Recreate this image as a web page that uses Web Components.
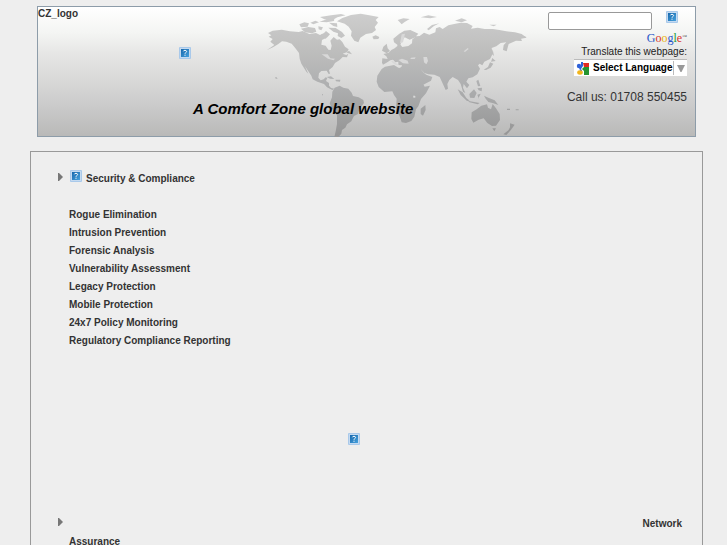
<!DOCTYPE html>
<html lang="en">
<head>
<meta charset="utf-8">
<title>Comfort Zone</title>
<style>
html { scrollbar-width: none; background: #eee; }
body { margin: 0; font-family: "Liberation Sans", Arial, sans-serif; font-size: 10px; line-height: 18px; color: #333; }
</style>
</head>
<body>
<cz-page>
  <cz-header>
    <cz-search slot="tools"></cz-search>
    <cz-translate slot="tools"></cz-translate>
  </cz-header>
  <cz-panel>
    <cz-section heading="Security &amp; Compliance" icon></cz-section>
    <cz-figure></cz-figure>
    <cz-section heading="Network Assurance" split></cz-section>
  </cz-panel>
</cz-page>
<script>
function define(name, html) {
  const t = document.createElement('template');
  t.innerHTML = html;
  customElements.define(name, class extends HTMLElement {
    constructor() {
      super();
      this.attachShadow({ mode: 'open' }).append(t.content.cloneNode(true));
    }
  });
}

define('cz-missing', `
<style>:host{display:inline-block;width:12px;height:12px}svg{display:block}</style>
<svg width="12" height="12" viewBox="0 0 12 12" aria-hidden="true">
  <defs><linearGradient id="g" x2="1" y2="1"><stop stop-color="#1768ad"/><stop offset="1" stop-color="#45a0dc"/></linearGradient></defs>
  <rect width="12" height="12" rx="1" fill="#a9c9ea"/><rect x="1" y="1" width="10" height="10" fill="#c5daf0"/>
  <rect x="2" y="2" width="8" height="8" fill="url(#g)"/>
  <path d="M4.4 4.3Q4.6 3.3 6 3.3T7.6 4.5Q7.6 5.2 6.8 5.6T6 6.7M6 7.7V8.8" fill="none" stroke="#fff" stroke-width="1"/>
</svg>`);

define('cz-world-map', `
<style>:host{display:block}svg{display:block;width:270px;height:130px}</style>
<svg viewBox="60 18 810 390" aria-hidden="true">
  <defs><linearGradient id="m" gradientUnits="userSpaceOnUse" x1="0" y1="30" x2="0" y2="400">
    <stop stop-color="#cfcfcf"/><stop offset=".3" stop-color="#bfbfbe"/><stop offset=".6" stop-color="#aeafb0"/><stop offset="1" stop-color="#969696"/>
  </linearGradient></defs>
  <g fill="url(#m)">
    <path d="M84 96L98 89 125 86 150 91 176 93 188 90 208 99 228 96 240 102 252 96 258 90 270 100 262 109 246 117 244 131 257 134 265 146 272 147 275 134 271 119 281 108 291 116 299 115 307 123 315 137 326 145 322 153 308 158 319 162 325 158 321 169 308 168 299 177 285 186 278 198 267 207 270 218 266 219 260 209 244 210 237 217 235 230 242 238 251 235 257 229 262 231 258 240 267 246 267 254 273 261 283 263 277 267 261 259 252 249 232 242 218 235 214 224 200 203 195 196 205 218 199 212 184 188 179 173 177 156 165 140 155 128 139 122 126 121 114 130 99 139 81 147 103 132 91 122 98 114 86 107 94 103Z"/>
    <path d="M178 70L193 64 207 67 203 77 183 79ZM183 83L205 78 225 81 229 92 216 97 195 94ZM211 65L226 59 237 64 220 70ZM235 76L249 79 244 88 236 85ZM238 62L261 55 283 54 282 60 260 64ZM240 48L273 43 303 39 317 43 292 49 278 57 253 55ZM267 65L291 67 292 78 280 75ZM265 80L287 81 306 93 315 104 304 111 293 105 294 97 280 92ZM243 100L262 103 258 113 246 109Z"/>
    <path d="M291 61L307 51 333 42 362 38 388 43 416 48 407 57 414 65 404 78 408 87 396 96 378 99 361 110 355 124 343 119 333 104 335 91 326 77 314 68ZM397 107L407 103 418 108 415 114 401 115ZM320 155L327 149 336 160ZM260 228L273 226 283 234 270 233ZM286 236L301 236 300 242 288 241Z"/>
    <path d="M284 260L299 254 310 260 325 263 335 275 339 285 356 289 370 297 372 306 359 322 354 339 342 345 334 361 321 370 316 380 306 387 304 398 295 408 283 408 287 391 291 369 291 343 276 323 269 307 276 289 277 272Z"/>
    <path d="M427 172L443 174 439 166 430 159 446 155 454 147 464 142 472 135 472 126 480 130 487 138 505 135 516 127 517 115 526 109 509 116 494 109 484 123 481 133 472 131 462 124 460 113 478 98 493 89 511 87 535 98 528 106 539 105 552 95 568 101 586 94 588 82 599 78 608 84 625 73 646 68 662 65 681 66 698 75 693 83 713 80 734 84 759 84 778 87 799 91 825 94 845 99 860 110 843 113 846 120 828 119 806 129 800 151 789 147 791 132 799 124 782 126 769 136 755 141 758 158 750 174 733 182 727 193 719 188 714 193 720 203 712 220 698 229 685 232 679 242 688 252 681 262 671 249 669 260 676 276 669 272 662 249 654 237 638 228 628 237 622 249 624 263 617 267 606 243 599 228 583 221 565 220 553 216 541 203 551 215 559 221 577 228 573 239 550 251 541 251 525 220 524 211 510 207 489 206 480 201 487 194 505 191 519 192 527 190 525 204 534 220 548 246 554 257 570 254 558 277 543 294 535 316 528 325 523 347 514 360 498 366 485 364 479 346 468 325 470 293 462 282 457 271 433 273 416 258 410 242 412 224 425 204 435 197 462 192 475 200 484 201 486 193 475 192 475 182 466 184 459 176 451 178 442 184 429 191 426 185Z"/>
    <path d="M426 149L430 137 440 128 443 142 450 150 440 157 433 153ZM473 57L490 52 509 54 494 63 485 70ZM542 49L565 43 591 48 571 52ZM561 84L576 72 598 67 582 75 566 88ZM645 59L665 52 681 58 665 64ZM748 71L770 71 761 76ZM839 101L859 108 844 112ZM542 323L556 312 557 327 549 344 542 339ZM731 206L744 198 750 184 760 188 752 200 738 207ZM753 182L757 171 767 180ZM755 158L758 145 762 165ZM709 240L715 236 721 255 714 256ZM712 262L726 260 725 271 716 268ZM653 265L668 274 679 291 689 299 681 300 662 282ZM688 279L702 265 710 276 703 291 690 290ZM686 300L719 306 713 310 686 303ZM712 281L722 278 716 290 718 298ZM732 284L745 290 764 298 775 312 760 307 745 303 736 292Z"/>
    <path d="M695 334L710 325 724 314 741 310 744 320 753 325 758 309 768 322 779 339 780 357 768 374 756 375 742 366 731 352 716 356 700 365 694 354ZM757 382L768 382 763 391ZM810 367L824 371 817 381 804 390 810 379ZM805 388L817 382 799 402 790 400Z"/>
    <path d="M105 229h5l3 4h-6ZM246 280h3v3h-3ZM801 323h9v4h-9ZM827 325h9v3h-9Z"/>
  </g>
  <g fill="#d8d8d8">
    <path d="M475 177L486 173 503 179 506 188 489 187ZM456 178L470 188 479 193 466 191 454 182ZM550 168L561 168 564 180 559 190 552 184ZM513 170L527 169 524 174 511 174ZM245 160L263 160 271 172 285 173 281 178 264 173Z"/>
    <path d="M485 100L495 98 489 124 480 127ZM671 151l12-10 3 3-11 9ZM519 284l6 0 2 5-6 2Z"/>
  </g>
</svg>`);

define('cz-page', `
<style>:host{display:block;padding:6px 24px 0 30px}</style><slot></slot>`);

define('cz-header', `
<style>
:host{display:grid;grid-template-columns:141px 1fr auto;position:relative;margin:0 7px 14px;min-height:129px;border:1px solid #8d9ca9;
  background:linear-gradient(#fff,#f4f5f3 20%,#e6e6e5 36%,#dadad9 55%,#cbcbcb 76%,#b9b9b8)}
cz-world-map{position:absolute;left:222px;top:0}
.logo{padding-top:1px;font-weight:bold;line-height:12px}
.mid{position:relative;padding-top:40px}
.mid cz-missing{display:block}
.slogan{margin:40px 0 0 14px;font:italic bold 15px/20px "Liberation Sans",Arial,sans-serif;color:#000}
.right{position:relative;display:flex;flex-direction:column;align-items:flex-end;padding:4px 8px 0 0}
.call{margin:12px 0 0;font-size:12px;line-height:18px}
</style>
<cz-world-map></cz-world-map>
<div class="logo">CZ_logo</div>
<div class="mid"><cz-missing></cz-missing><p class="slogan">A Comfort Zone global website</p></div>
<div class="right"><slot name="tools"></slot><p class="call">Call us: 01708 550455</p></div>`);

define('cz-search', `
<style>
:host{display:flex;align-items:flex-start;gap:14px;padding-right:9px}
input{box-sizing:border-box;width:104px;height:18px;margin:1px 0 0;padding:0 3px;border:1px solid #999;border-radius:2px;background:#fff;font:10px "Liberation Sans",sans-serif}
button{padding:0;border:0;background:none;line-height:0}
</style>
<input type="search" aria-label="Search"><button aria-label="Go"><cz-missing></cz-missing></button>`);

define('cz-translate', `
<style>
:host{display:flex;flex-direction:column;align-items:flex-end;margin-top:1px}
.google{font:12px/14px "Liberation Serif",serif}
.b{color:#2a56c8}.r{color:#d8342c}.y{color:#e8b010}.g{color:#249a3c}
sup{font-size:5px;line-height:0;vertical-align:4px;color:#555}
label{line-height:14px;color:#222}
.box{display:flex;align-items:center;box-sizing:border-box;height:17px;padding:0 2px;gap:4px;background:#fff;border-top:1px solid #bbb}
select{appearance:none;width:80px;height:16px;padding:0;border:0;background:none;color:#000;font:bold 10px/16px "Liberation Sans",sans-serif}
.arrow{display:block;padding-left:3px;border-left:1px solid #bbb;margin-left:-4px}
svg{display:block}
</style>
<div class="google"><span class="b">G</span><span class="r">o</span><span class="y">o</span><span class="b">g</span><span class="g">l</span><span class="r">e</span><sup>™</sup></div>
<label for="lang">Translate this webpage:</label>
<div class="box">
  <svg width="13" height="13" viewBox="0 0 13 13" aria-hidden="true">
    <path d="M7 1h6v4H8Z" fill="#e02a22"/><path d="M8 5h5v8H8V9L6 7Z" fill="#259431"/>
    <circle cx="3" cy="4" r="2.2" fill="#2f62d9"/><path d="M5 0h2v4L5 7H3L5 4Z" fill="#2f62d9"/>
    <path d="M3.500 6.500L6 8V9H4Z" fill="#2f62d9"/><ellipse cx="4" cy="10.500" rx="2.800" ry="2.200" fill="#f2b51c"/>
  </svg>
  <select id="lang"><option>Select Language</option></select>
  <span class="arrow"><svg width="8" height="14" viewBox="0 0 8 14" aria-hidden="true"><path d="M0 4h8L4.500 11h-1Z" fill="#999"/></svg></span>
</div>`);

define('cz-panel', `
<style>:host{display:block;border:1px solid #999;padding:18px 20px 20px 27px}</style><slot></slot>`);

define('cz-figure', `
<style>:host{display:flex;justify-content:center;padding:83px 0 70px 0}cz-missing{margin-right:33px}</style><cz-missing></cz-missing>`);

class CzSection extends HTMLElement {
  constructor() { super(); this.attachShadow({ mode: 'open' }); }
  connectedCallback() {
    const split = this.hasAttribute('split');
    const items = ['Rogue Elimination', 'Intrusion Prevention', 'Forensic Analysis', 'Vulnerability Assessment',
      'Legacy Protection', 'Mobile Protection', '24x7 Policy Monitoring', 'Regulatory Compliance Reporting'];
    const [first, ...rest] = this.getAttribute('heading').split(' ');
    this.shadowRoot.innerHTML = `
<style>
:host{display:grid;grid-template-columns:11px 1fr;font-weight:bold}
.marker{display:block;margin-top:3px}
a{color:inherit;text-decoration:none}
.head{display:flex;gap:4px;align-items:flex-start;padding-left:1px}
ul{grid-column:2;list-style:none;margin:18px 0 0;padding:0}
a.split{display:block}
.end{display:block;text-align:right}
</style>
<svg class="marker" width="5" height="8" viewBox="0 0 5 8" aria-hidden="true"><path d="M0 0h1l4 4-4 4H0Z" fill="#777"/></svg>
${split ? `<a class="split" href="#network"><span class="end">${first}</span> ${rest.join(' ')}</a>`
  : `<div class="head"><cz-missing></cz-missing><a href="#security"></a></div>
<ul>${items.map(i => `<li><a href="#">${i}</a></li>`).join('')}</ul>`}`;
    if (!split) this.shadowRoot.querySelector('.head a').textContent = this.getAttribute('heading');
  }
}
customElements.define('cz-section', CzSection);
</script>
</body>
</html>
